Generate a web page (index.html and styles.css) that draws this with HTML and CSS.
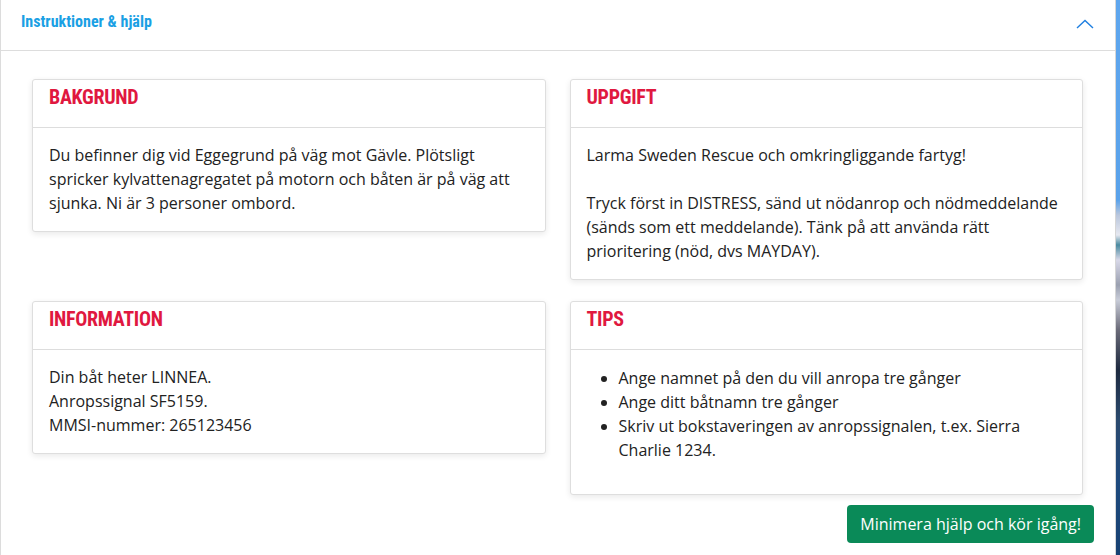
FILE: index.html
```html
<!DOCTYPE html>
<html lang="sv">
<head>
<meta charset="utf-8">
<title>Instruktioner &amp; hjälp</title>
<link rel="stylesheet" href="styles.css">
</head>
<body>
<div class="page">
  <section class="panel">
    <header class="panel-head">
      <h1 class="panel-title">Instruktioner &amp; hjälp</h1>
      <svg class="chevron" width="18" height="10" viewBox="0 0 18 10" aria-hidden="true">
        <polyline points="1,9 9,1.5 17,9" fill="none" stroke="#1f7fe0" stroke-width="1.4"/>
      </svg>
    </header>
    <div class="panel-body">
      <div class="grid">
        <article class="card">
          <h2 class="card-title">BAKGRUND</h2>
          <div class="card-body">
            <p>Du befinner dig vid Eggegrund på väg mot Gävle. Plötsligt spricker kylvattenagregatet på motorn och båten är på väg att sjunka. Ni är 3 personer ombord.</p>
          </div>
        </article>
        <article class="card">
          <h2 class="card-title">UPPGIFT</h2>
          <div class="card-body">
            <p>Larma Sweden Rescue och omkringliggande fartyg!<br><br>Tryck först in DISTRESS, sänd ut nödanrop och nödmeddelande (sänds som ett meddelande). Tänk på att använda rätt prioritering (nöd, dvs MAYDAY).</p>
          </div>
        </article>
        <article class="card">
          <h2 class="card-title">INFORMATION</h2>
          <div class="card-body">
            <p>Din båt heter LINNEA.<br>Anropssignal SF5159.<br>MMSI-nummer: 265123456</p>
          </div>
        </article>
        <article class="card">
          <h2 class="card-title">TIPS</h2>
          <div class="card-body">
            <ul class="tips">
              <li>Ange namnet på den du vill anropa tre gånger</li>
              <li>Ange ditt båtnamn tre gånger</li>
              <li>Skriv ut bokstaveringen av anropssignalen, t.ex. Sierra Charlie 1234.</li>
            </ul>
          </div>
        </article>
      </div>
      <div class="actions">
        <button class="btn-go" type="button">Minimera hjälp och kör igång!</button>
      </div>
    </div>
  </section>
  <div class="strip"></div>
</div>
</body>
</html>
```

FILE: styles.css
```css
* { box-sizing: border-box; }

html, body {
  margin: 0;
  padding: 0;
  height: 100%;
  background: #ffffff;
}

body {
  font-family: "Open Sans", "Noto Sans", sans-serif;
  color: #222222;
  overflow: hidden;
}

.page {
  display: flex;
  width: 1120px;
  height: 555px;
}

.panel {
  width: 1116px;
  flex: none;
  border-left: 1px solid #dcdcdc;
  border-right: 1px solid #d6d6d6;
  background: #ffffff;
}

.strip {
  flex: 1;
  background: linear-gradient(to bottom,
    #5ea6ee 0px, #5aa2ea 200px,
    #b9c6dc 215px, #e6e8f0 235px, #4a8aa0 245px, #d8d8e8 260px,
    #9aa0b0 285px, #c8ccd8 300px, #6a6a78 330px, #1d2a40 370px,
    #2b4a6e 420px, #1e4a7e 480px, #174172 555px);
}

.panel-head {
  height: 51px;
  border-bottom: 1px solid #dddddd;
  display: flex;
  align-items: center;
  justify-content: space-between;
  padding: 0 20px 0 20px;
}

.panel-title {
  margin: 0;
  padding-bottom: 8px;
  font-family: "Liberation Sans Narrow", "Roboto Condensed", "Liberation Sans", sans-serif;
  font-weight: 700;
  font-size: 16px;
  color: #1aa0e4;
}

.chevron {
  display: block;
  margin-right: 1px;
  margin-bottom: 3px;
}

.panel-body {
  padding: 28px 32px 0 31px;
}

.grid {
  display: grid;
  grid-template-columns: 1fr 1fr;
  column-gap: 24px;
  row-gap: 21px;
  align-items: start;
}

.card {
  border: 1px solid #dedede;
  border-radius: 3px;
  background: #ffffff;
  box-shadow: 0 2px 6px rgba(0, 0, 0, 0.09);
}

.card-title {
  margin: 0;
  height: 48px;
  padding: 5px 16px 0 16px;
  border-bottom: 1px solid #dddddd;
  font-family: "Liberation Sans Narrow", "Roboto Condensed", "Liberation Sans", sans-serif;
  font-weight: 700;
  font-size: 20px;
  letter-spacing: -0.3px;
  line-height: 24px;
  color: #e0183f;
}

.card-body {
  padding: 15px 16px 16px 16px;
  font-size: 16px;
  line-height: 24px;
}

.card-body p {
  margin: 0;
}

.tips {
  margin: 1px 0 16px 0;
  padding-left: 32px;
}

.actions {
  display: flex;
  justify-content: flex-end;
  padding-top: 10px;
  margin-right: -11px;
}

.btn-go {
  font-family: "Open Sans", "Noto Sans", sans-serif;
  font-size: 16px;
  color: #ffffff;
  background: #0a8a58;
  border: none;
  border-radius: 4px;
  height: 38px;
  padding: 0 13px;
  line-height: 38px;
  cursor: pointer;
}
```
